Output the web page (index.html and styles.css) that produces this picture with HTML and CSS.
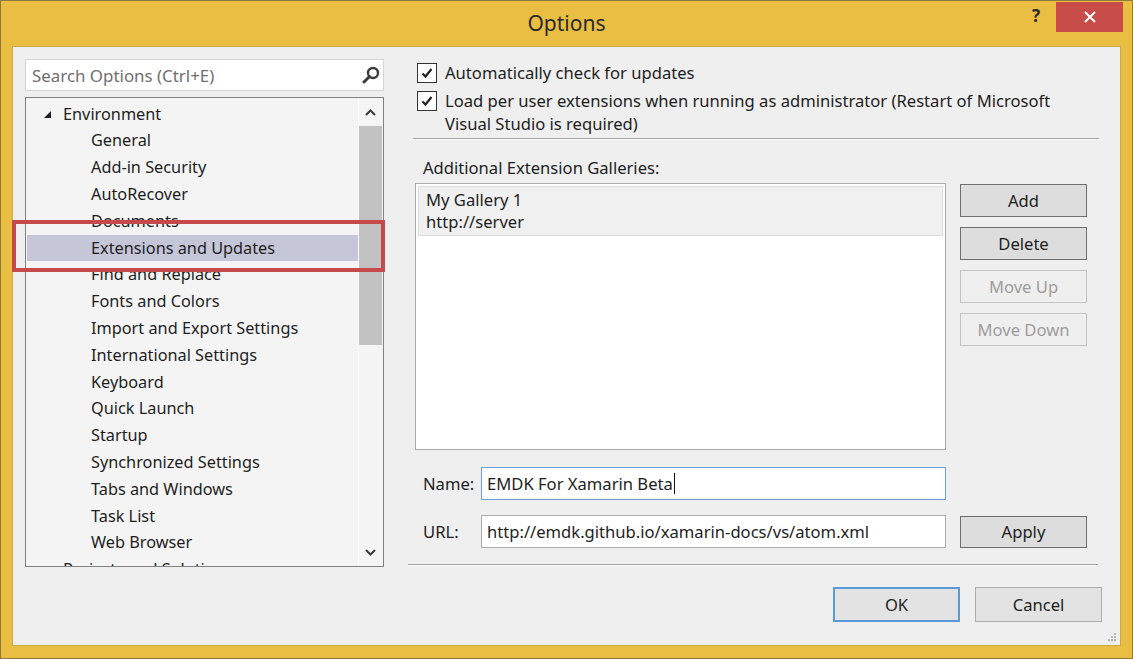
FILE: index.html
```html
<!DOCTYPE html>
<html lang="en">
<head>
<meta charset="utf-8">
<title>Options</title>
<link rel="stylesheet" href="styles.css">
</head>
<body>
<div class="window">
  <div class="titlebar">
    <div class="tb-spacer"></div>
    <div class="title">Options</div>
    <div class="tb-controls">
      <span class="help">?</span>
      <div class="close">
        <svg width="12" height="12" viewBox="0 0 12 12"><path d="M1 1 L11 11 M11 1 L1 11" stroke="#fff" stroke-width="2"/></svg>
      </div>
    </div>
  </div>
  <div class="client">
    <div class="left">
      <div class="search">
        <span class="search-text">Search Options (Ctrl+E)</span>
        <svg class="search-icon" width="18" height="18" viewBox="0 0 18 18"><circle cx="11" cy="7" r="5" fill="none" stroke="#3c3c3c" stroke-width="2.4"/><path d="M7.5 10.5 L2 16" stroke="#3c3c3c" stroke-width="3" stroke-linecap="round"/></svg>
      </div>
      <div class="tree">
        <div class="tree-items">
          <div class="item top"><svg class="tri" width="9" height="9" viewBox="0 0 9 9"><path d="M8 1 L8 8 L1 8 Z" fill="#1e1e1e"/></svg>Environment</div>
          <div class="item child">General</div>
          <div class="item child">Add-in Security</div>
          <div class="item child">AutoRecover</div>
          <div class="item child">Documents</div>
          <div class="item child selected">Extensions and Updates</div>
          <div class="item child">Find and Replace</div>
          <div class="item child">Fonts and Colors</div>
          <div class="item child">Import and Export Settings</div>
          <div class="item child">International Settings</div>
          <div class="item child">Keyboard</div>
          <div class="item child">Quick Launch</div>
          <div class="item child">Startup</div>
          <div class="item child">Synchronized Settings</div>
          <div class="item child">Tabs and Windows</div>
          <div class="item child">Task List</div>
          <div class="item child">Web Browser</div>
          <div class="item top">Projects and Solutions</div>
        </div>
        <div class="scrollbar">
          <div class="sb-btn"><svg width="11" height="7" viewBox="0 0 11 7"><path d="M1 6 L5.5 1.5 L10 6" fill="none" stroke="#3a3a3a" stroke-width="2"/></svg></div>
          <div class="sb-track"><div class="sb-thumb"></div></div>
          <div class="sb-btn"><svg width="11" height="7" viewBox="0 0 11 7"><path d="M1 1 L5.5 5.5 L10 1" fill="none" stroke="#3a3a3a" stroke-width="2"/></svg></div>
        </div>
        <div class="highlight"></div>
      </div>
    </div>
    <div class="right">
      <label class="check one">
        <span class="box"><svg width="14" height="14" viewBox="0 0 14 14"><path d="M2.5 7.5 L5.5 10.5 L11.5 3" fill="none" stroke="#222" stroke-width="2.2"/></svg></span>
        <span>Automatically check for updates</span>
      </label>
      <label class="check two">
        <span class="box"><svg width="14" height="14" viewBox="0 0 14 14"><path d="M2.5 7.5 L5.5 10.5 L11.5 3" fill="none" stroke="#222" stroke-width="2.2"/></svg></span>
        <span>Load per user extensions when running as administrator (Restart of Microsoft Visual Studio is required)</span>
      </label>
      <div class="sep top-sep"></div>
      <div class="gal-label">Additional Extension Galleries:</div>
      <div class="gallery-row">
        <div class="listbox">
          <div class="gal-item">
            <div>My Gallery 1</div>
            <div>http://server</div>
          </div>
        </div>
        <div class="btn-col">
          <div class="btn">Add</div>
          <div class="btn">Delete</div>
          <div class="btn disabled">Move Up</div>
          <div class="btn disabled">Move Down</div>
        </div>
      </div>
      <div class="field-row name-row">
        <span class="field-label">Name:</span>
        <div class="input focused">EMDK For Xamarin Beta<span class="caret"></span></div>
      </div>
      <div class="field-row url-row">
        <span class="field-label">URL:</span>
        <div class="input">http://emdk.github.io/xamarin-docs/vs/atom.xml</div>
        <div class="btn apply">Apply</div>
      </div>
      <div class="sep bottom-sep"></div>
      <div class="dialog-btns">
        <div class="btn2 default">OK</div>
        <div class="btn2">Cancel</div>
      </div>
    </div>
    <svg class="grip" width="10" height="10" viewBox="0 0 10 10"><g fill="#b8b8b8"><rect x="7" y="1" width="2" height="2"/><rect x="4" y="4" width="2" height="2"/><rect x="7" y="4" width="2" height="2"/><rect x="1" y="7" width="2" height="2"/><rect x="4" y="7" width="2" height="2"/><rect x="7" y="7" width="2" height="2"/></g></svg>
  </div>
</div>
</body>
</html>
```

FILE: styles.css
```css
* { box-sizing: border-box; }
html, body { margin: 0; padding: 0; }
body {
  width: 1133px;
  height: 659px;
  overflow: hidden;
  background: #ffffff;
  font-family: "Noto Sans", "Open Sans", sans-serif;
  font-size: 16px;
  color: #1e1e1e;
}
.window {
  width: 1133px;
  height: 659px;
  border: 1px solid #8c7a3c;
  background: #e9be43;
  display: flex;
  flex-direction: column;
  padding: 0 11px 12px 11px;
}
.titlebar {
  height: 45px;
  display: grid;
  grid-template-columns: 1fr auto 1fr;
  align-items: start;
  flex: none;
}
.title {
  font-size: 21px;
  color: #2a2a2a;
  line-height: 45px;
}
.tb-controls {
  justify-self: end;
  display: flex;
  align-items: flex-start;
  margin-right: -2px;
}
.help {
  font-weight: bold;
  font-size: 17px;
  color: #2a2a2a;
  line-height: 30px;
  margin-right: 16px;
}
.close {
  width: 67px;
  height: 30px;
  margin-top: 1px;
  background: #c84c47;
  display: flex;
  align-items: center;
  justify-content: center;
}
.client {
  flex: 1;
  position: relative;
  border: 1px solid #c9aa4c;
  background: #efefef;
  display: flex;
  padding: 12px 0 0 12px;
}
.left {
  width: 359px;
  flex: none;
}
.search {
  height: 32px;
  background: #fff;
  border: 1px solid #d4d4d4;
  display: flex;
  align-items: center;
  justify-content: space-between;
  padding: 0 3px 0 6px;
}
.search-text { color: #6f6f6f; font-size: 16.9px; }
.tree {
  position: relative;
  margin-top: 6px;
  height: 470px;
  border: 1px solid #828282;
  background: #f4f4f4;
  display: flex;
  font-size: 16.3px;
}
.tree-items {
  flex: 1;
  overflow: hidden;
  padding-top: 2.6px;
}
.item {
  height: 26.8px;
  line-height: 26.8px;
  white-space: nowrap;
  margin-left: 1px;
}
.item.top { padding-left: 36px; position: relative; }
.item.child { padding-left: 64px; }
.item.selected { background: #c6c6d9; }
.tri { position: absolute; left: 16px; top: 9px; }
.scrollbar {
  width: 25px;
  flex: none;
  display: flex;
  flex-direction: column;
  border-left: 1px solid #fbfbfb;
  padding: 0 1px 0 0;
}
.sb-btn {
  height: 28px;
  display: flex;
  align-items: center;
  justify-content: center;
  flex: none;
}
.sb-track { flex: 1; }
.sb-thumb {
  height: 219px;
  background: #c2c2c2;
}
.highlight {
  position: absolute;
  left: -14px;
  top: 122px;
  width: 373px;
  height: 52px;
  border: 4px solid #c64a4c;
}
.right {
  width: 689px;
  margin-left: 29px;
  display: flex;
  flex-direction: column;
  font-size: 16.6px;
}
.check {
  display: flex;
  align-items: flex-start;
  line-height: 23px;
}
.check.one { margin-top: 2px; }
.check.two { margin-top: 5px; width: 650px; }
.box {
  width: 20px;
  height: 20px;
  flex: none;
  margin: 2px 8px 0 4px;
  background: #fff;
  border: 1px solid #333;
  display: flex;
  align-items: center;
  justify-content: center;
}
.sep {
  background: #a3a3a3;
  border-bottom: 1px solid #fbfbfb;
  height: 2px;
}
.top-sep { margin-top: 3px; width: 686px; }
.gal-label { margin-top: 16px; line-height: 23px; padding-left: 10px; }
.gallery-row {
  margin-top: 4px;
  display: flex;
  align-items: flex-start;
}
.listbox {
  margin-left: 2px;
  width: 531px;
  height: 267px;
  background: #fff;
  border: 1px solid #a9a9a9;
  padding: 2px;
}
.gal-item {
  background: #f0f0f0;
  border: 1px solid #dcdcdc;
  padding: 2px 0 0 7px;
  height: 50px;
  line-height: 22px;
}
.btn-col {
  margin-left: 14px;
  display: flex;
  flex-direction: column;
  gap: 10px;
  margin-top: 1px;
}
.btn {
  width: 127px;
  height: 33px;
  background: #dddddd;
  border: 1px solid #6f6f6f;
  display: flex;
  align-items: center;
  justify-content: center;
}
.btn.disabled {
  background: #efefef;
  border-color: #c3c3c3;
  color: #9d9d9d;
}
.field-row {
  display: flex;
  align-items: center;
}
.name-row { margin-top: 17px; }
.url-row { margin-top: 15px; }
.field-label { width: 68px; padding-left: 10px; flex: none; }
.input {
  width: 465px;
  height: 33px;
  background: #fff;
  border: 1px solid #acacac;
  display: flex;
  align-items: center;
  padding-left: 5px;
  white-space: nowrap;
}
.input.focused { border-color: #6f9fd8; }
.caret {
  display: inline-block;
  width: 1px;
  height: 21px;
  background: #111;
  margin-left: 1px;
}
.btn.apply { margin-left: 14px; height: 32px; }
.bottom-sep { margin-top: 16px; margin-left: -5px; width: 690px; }
.dialog-btns {
  margin-top: 21px;
  display: flex;
  justify-content: flex-end;
  gap: 15px;
}
.btn2 {
  width: 127px;
  height: 35px;
  background: #e3e3e3;
  border: 1px solid #adadad;
  display: flex;
  align-items: center;
  justify-content: center;
}
.btn2.default { border: 2px solid #5a9ad8; }
.grip { position: absolute; right: 3px; bottom: 3px; }
```
